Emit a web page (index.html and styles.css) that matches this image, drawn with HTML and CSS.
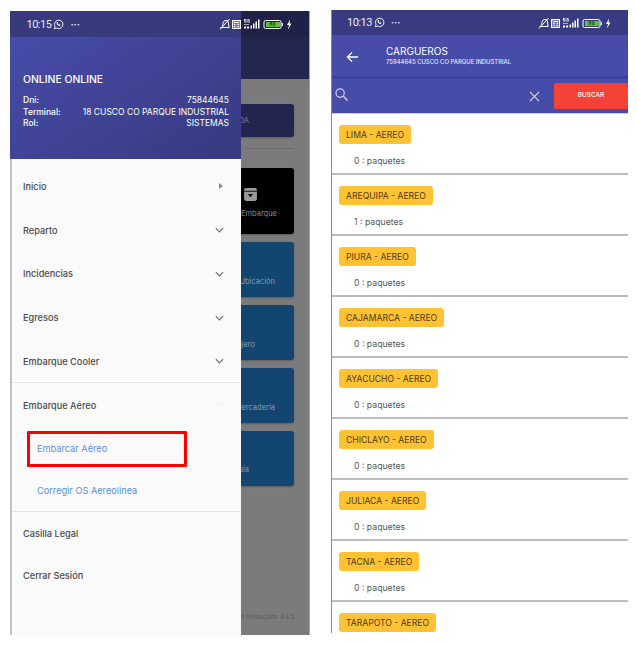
FILE: index.html
```html
<!DOCTYPE html>
<html lang="es">
<head>
<meta charset="utf-8">
<title>Embarque Aéreo</title>
<link rel="stylesheet" href="styles.css">
</head>
<body>
<svg class="defs" width="0" height="0" aria-hidden="true">
  <symbol id="status-icons" viewBox="0 0 74 12">
    <g fill="none" stroke="#fff" stroke-width="1">
      <path d="M1.500 9.500h9M3 9c1-1 .8-2.500 1-4 .3-1.500 1.400-2.500 3-2.500 1 0 1.800.4 2.300 1.100L10 9M1 11.500 10.500 1"/>
      <rect x="13.500" y="2.500" width="8" height="8" fill="#fff" fill-opacity=".35"/>
      <path d="M15 4.500h5M15 6.500h1.500M18.500 6.500h1.500M15 8.500h1.500M18.500 8.500h1.500"/>
    </g>
    <g fill="#fff">
      <rect x="25" y="8.500" width="2" height="2"/><rect x="28" y="8.500" width="2" height="2"/><rect x="25" y="6" width="5" height="1" opacity=".6"/>
      <rect x="31.500" y="7.500" width="1.500" height="3"/><rect x="34" y="5.500" width="1.500" height="5"/><rect x="36.500" y="3.500" width="1.500" height="7"/><rect x="39" y="1.500" width="1.500" height="9"/>
      <path d="M25 1h2.500v.8H26v.7h1.500v2H25v-.7h1.600V3.300H25zM28.500 1H30.500v.8h-1.200v2h.8V3h-.5v-.7h1.200v2.200H28.500z" opacity=".9"/>
    </g>
    <rect x="45" y="2.500" width="17" height="8" rx="1.500" fill="none" stroke="#fff"/>
    <rect x="62.700" y="5" width="1.200" height="3" fill="#fff"/>
    <path d="M71 1.500 68 7h2l-1 4.500 3.500-6h-2z" fill="#fff"/>
  </symbol>
  <symbol id="whatsapp" viewBox="0 0 12 12">
    <path d="M1.500 10.700 2.200 8.100A4.600 4.600 0 1 1 4 9.900Z" fill="none" stroke="#fff" stroke-width="1"/>
    <path d="M4.300 3.600c-.8.700-.3 2 .6 2.900s2.200 1.400 2.900.7c.4-.4.400-.8.300-.9l-1-.6-.5.500c-.6-.2-1.300-.9-1.500-1.500l.5-.5-.6-1c-.1-.1-.4 0-.7.400Z" fill="#fff"/>
  </symbol>
  <symbol id="chevron" viewBox="0 0 10 6">
    <path d="M1 1l4 4 4-4" fill="none" stroke="currentColor" stroke-width="1.300"/>
  </symbol>
</svg>

<main class="page">
  <section class="phone phone-left">
    <div class="behind">
      <div class="behind-status"></div>
      <div class="behind-bar"></div>
      <div class="behind-body">
        <div class="tile tile-navy"><span class="tile-text">DA</span></div>
        <hr class="behind-rule">
        <div class="tile tile-black">
          <svg class="box-icon" viewBox="0 0 14 14" aria-hidden="true"><rect x="1" y="1" width="12" height="12" rx="2" fill="#999"/><path d="M1 4h12" stroke="#000" stroke-width=".8"/><path d="M4.500 6.500h5L7 9.500z" fill="#111"/></svg>
          <span class="tile-text tile-text-embarque">Embarque</span>
        </div>
        <div class="tile tile-blue"><span class="tile-text tile-text-a">Ubicación</span></div>
        <div class="tile tile-blue"><span class="tile-text tile-text-b">Pasajero</span></div>
        <div class="tile tile-blue"><span class="tile-text tile-text-a">Mercadería</span></div>
        <div class="tile tile-blue"><span class="tile-text tile-text-c">Guía</span></div>
        <p class="version">En Producción 4.6.5</p>
      </div>
    </div>

    <aside class="drawer">
      <div class="status status-drawer">
        <span class="time">10:15</span>
        <svg class="wa" aria-hidden="true"><use href="#whatsapp"/></svg>
        <span class="dots">···</span>
        <div class="status-right">
          <svg class="status-svg" aria-hidden="true"><use href="#status-icons"/></svg>
          <span class="battery">86</span>
        </div>
      </div>
      <header class="profile">
        <h1 class="profile-name">ONLINE ONLINE</h1>
        <dl class="profile-data">
          <div class="profile-row"><dt>Dni:</dt><dd>75844645</dd></div>
          <div class="profile-row"><dt>Terminal:</dt><dd>18 CUSCO CO PARQUE INDUSTRIAL</dd></div>
          <div class="profile-row"><dt>Rol:</dt><dd>SISTEMAS</dd></div>
        </dl>
      </header>
      <nav class="menu">
        <div class="menu-item"><span>Inicio</span><span class="arrow-right"></span></div>
        <div class="menu-item"><span>Reparto</span><svg class="chev" aria-hidden="true"><use href="#chevron"/></svg></div>
        <div class="menu-item"><span>Incidencias</span><svg class="chev" aria-hidden="true"><use href="#chevron"/></svg></div>
        <div class="menu-item"><span>Egresos</span><svg class="chev" aria-hidden="true"><use href="#chevron"/></svg></div>
        <div class="menu-item menu-item-ruled"><span>Embarque Cooler</span><svg class="chev" aria-hidden="true"><use href="#chevron"/></svg></div>
        <div class="menu-item"><span>Embarque Aéreo</span><svg class="chev chev-up" aria-hidden="true"><use href="#chevron"/></svg></div>
        <div class="submenu">
          <div class="sub-item">Embarcar Aéreo<span class="highlight"></span></div>
          <div class="sub-item">Corregir OS Aereolinea</div>
        </div>
        <div class="menu-item menu-item-plain">Casilla Legal</div>
        <div class="menu-item menu-item-plain">Cerrar Sesión</div>
      </nav>
    </aside>
  </section>

  <section class="phone phone-right">
    <div class="status status-right-phone">
      <span class="time">10:13</span>
      <svg class="wa" aria-hidden="true"><use href="#whatsapp"/></svg>
      <span class="dots">···</span>
      <div class="status-right status-right-b">
        <svg class="status-svg" aria-hidden="true"><use href="#status-icons"/></svg>
        <span class="battery">86</span>
      </div>
    </div>
    <header class="appbar">
      <svg class="back" viewBox="0 0 14 12" aria-hidden="true"><path d="M13 6H1.500M6.500 1 1.500 6l5 5" fill="none" stroke="#fff" stroke-width="1.400"/></svg>
      <div class="appbar-titles">
        <h2 class="appbar-title">CARGUEROS</h2>
        <p class="appbar-sub">75844645 CUSCO CO PARQUE INDUSTRIAL</p>
      </div>
    </header>
    <div class="searchbar">
      <svg class="search-icon" viewBox="0 0 14 14" aria-hidden="true"><circle cx="5.500" cy="5.500" r="4.500" fill="none" stroke="#cfd2ee" stroke-width="1.300"/><path d="M9 9l4.500 4.500" stroke="#cfd2ee" stroke-width="1.500"/></svg>
      <svg class="clear-icon" viewBox="0 0 12 12" aria-hidden="true"><path d="M1 1l10 10M11 1 1 11" stroke="#d8daf0" stroke-width="1.200"/></svg>
      <button class="search-btn" type="button">BUSCAR</button>
    </div>
    <ul class="cargo-list">
      <li class="cargo"><span class="chip">LIMA - AEREO</span><span class="count">0 : paquetes</span></li>
      <li class="cargo"><span class="chip">AREQUIPA - AEREO</span><span class="count">1 : paquetes</span></li>
      <li class="cargo"><span class="chip">PIURA - AEREO</span><span class="count">0 : paquetes</span></li>
      <li class="cargo"><span class="chip">CAJAMARCA - AEREO</span><span class="count">0 : paquetes</span></li>
      <li class="cargo"><span class="chip">AYACUCHO - AEREO</span><span class="count">0 : paquetes</span></li>
      <li class="cargo"><span class="chip">CHICLAYO - AEREO</span><span class="count">0 : paquetes</span></li>
      <li class="cargo"><span class="chip">JULIACA - AEREO</span><span class="count">0 : paquetes</span></li>
      <li class="cargo"><span class="chip">TACNA - AEREO</span><span class="count">0 : paquetes</span></li>
      <li class="cargo"><span class="chip">TARAPOTO - AEREO</span></li>
    </ul>
  </section>
</main>
</body>
</html>
```
FILE: styles.css
```css
* { box-sizing: border-box; }
html, body { margin: 0; padding: 0; background: #fff; }
body { width: 637px; height: 645px; overflow: hidden; font-family: Inter, Roboto, sans-serif; }
.defs { position: absolute; }
.page { display: flex; align-items: flex-start; gap: 21px; padding: 10px 0 0 10px; }

.phone { position: relative; overflow: hidden; flex: none; }
.phone-left { width: 300px; height: 624px; margin-top: 1px; border-right: 1px solid #a5a5a5; }
.phone-right { width: 297px; height: 623px; background: #fff; border-left: 1px solid #8b8b8b; }

/* backdrop page */
.behind { height: 100%; background: #7b7b7b; display: flex; flex-direction: column; }
.behind-status { height: 26px; flex: none; background: #1f2146; }
.behind-bar { height: 42px; flex: none; background: #23264f; }
.behind-body { flex: 1; display: flex; flex-direction: column; align-items: flex-end; padding: 25px 15px 0 0; }
.tile { position: relative; width: 86px; flex: none; border-radius: 3px; margin-bottom: 8px; box-shadow: 0 1px 2px rgba(0,0,0,.25); }
.tile-navy { height: 33px; background: #22244f; margin-bottom: 12px; }
.tile-black { height: 66px; background: #000; margin-top: 19px; }
.tile-blue { height: 55px; background: #124570; }
.tile-text { position: absolute; right: 19px; bottom: 10px; font-size: 7.500px; line-height: 10px; color: #8f9ba9; white-space: nowrap; }
.tile-navy .tile-text { right: 45px; bottom: 11px; color: #7c7c98; }
.tile-text-embarque { right: 17px; bottom: 15px; color: #8b8b8b; }
.tile-text-b { right: 39px; }
.tile-text-c { right: 45px; bottom: 11px; }
.box-icon { position: absolute; left: 35px; top: 19px; width: 15px; height: 15px; }
.behind-rule { width: 50px; margin: 0 0 18px; border: 0; border-top: 1px solid #6c6c6c; position: absolute; top: 137px; }
.version { position: absolute; right: 15px; top: 602px; margin: 0; font-size: 6px; line-height: 8px; color: #575757; white-space: nowrap; }

/* drawer */
.drawer { position: absolute; left: 0; top: 0; bottom: 0; width: 231px; background: #fafafa; border-left: 2px solid #c4c4c4; display: flex; flex-direction: column; }
.status { position: relative; height: 26px; flex: none; display: flex; align-items: center; color: #e8e9f5; }
.status-drawer { background: #373a7d; margin-left: -2px; padding-left: 16.500px; }
.status-right-phone { height: 25px; background: #383b80; padding-left: 15px; }
.time { font-family: Roboto, sans-serif; font-size: 11px; letter-spacing: -.5px; }
.wa { width: 11px; height: 11px; margin-left: 2px; }
.dots { margin-left: 6px; font-size: 10px; font-weight: 600; line-height: 11px; letter-spacing: 0; }
.status-right { position: absolute; right: -52px; top: 7px; width: 74px; height: 12px; }
.status-right-b { right: 16px; }
.status-svg { display: block; width: 74px; height: 12px; }
.battery { position: absolute; left: 46.500px; top: 4px; width: 14px; height: 5px; background: #5cc23c; font-size: 5px; line-height: 5px; font-weight: 600; text-align: center; color: #1f3d10; }
.profile { height: 122px; flex: none; margin-left: -2px; padding: 36px 12px 0 13px; background: linear-gradient(145deg, #474ca8 0%, #363a80 100%); color: #fff; }
.profile-name { margin: 0 0 8px; font-size: 10.400px; line-height: 14px; font-weight: 500; }
.profile-data { margin: 0; font-size: 8.500px; line-height: 11.500px; }
.profile-row { display: flex; justify-content: space-between; }
.profile-row dt, .profile-row dd { margin: 0; }
.profile-row dt { font-weight: 500; }

.menu { flex: 1; display: flex; flex-direction: column; padding-top: 5.500px; color: #4a4a4a; font-size: 9.200px; }
.menu-item { height: 43.800px; flex: none; padding: 0 17px 0 11px; display: flex; align-items: center; justify-content: space-between; font-weight: 500; }
.menu-item-ruled { border-bottom: 1px solid #e4e4e4; }
.menu-item-plain { height: 42px; justify-content: flex-start; }
.chev { width: 9px; height: 6px; color: #6f6f6f; }
.chev-up { transform: rotate(180deg); color: #f2f2f2; }
.arrow-right { width: 0; height: 0; margin-right: 1px; border-left: 4px solid #8a8a8a; border-top: 3.500px solid transparent; border-bottom: 3.500px solid transparent; }
.submenu { flex: none; border-bottom: 1px solid #e4e4e4; }
.sub-item { position: relative; height: 42px; padding-left: 25px; display: flex; align-items: center; color: #5b8fe8; font-size: 9.200px; }
.highlight { position: absolute; left: 15px; top: 3.500px; width: 160px; height: 36px; border: 3px solid #f00; border-radius: 1px; }

/* right phone */
.appbar { height: 43px; display: flex; align-items: center; background: #474ca8; padding: 0 0 4px 14px; box-shadow: inset 0 -1px 1px rgba(30,32,90,.45); color: #fff; }
.back { width: 13px; height: 12px; flex: none; margin-top: 4px; }
.appbar-titles { margin-left: 27px; }
.appbar-title { margin: 0; font-size: 10px; line-height: 13px; font-weight: 400; }
.appbar-sub { margin: 0; font-size: 5.900px; line-height: 7px; font-weight: 500; white-space: nowrap; color: #e8e9f8; }
.searchbar { height: 36px; display: flex; align-items: center; background: #474ca8; padding-left: 3px; border-bottom: 1px solid #c9cbe6; }
.search-icon { width: 13px; height: 13px; margin-top: -2px; }
.clear-icon { width: 11px; height: 11px; margin-left: 181px; margin-top: 1px; }
.search-btn { width: 74px; height: 26px; margin: 0 0 0 14px; padding: 0; border: 0; border-radius: 2px; background: #f44336; color: #fff; font: 500 6.400px/1 Inter, sans-serif; }
.cargo-list { margin: 0; padding: 0; list-style: none; }
.cargo { height: 61px; padding: 11px 0 0 7px; display: flex; flex-direction: column; align-items: flex-start; border-bottom: 2px solid #bcbcbc; }
.chip { height: 19px; padding: 0 7px; display: flex; align-items: center; border-radius: 3px; background: #ffc233; color: #4d3b12; font-size: 8.600px; white-space: nowrap; }
.count { margin: 12px 0 0 15px; font-size: 8.700px; line-height: 11px; color: #555; }
```
